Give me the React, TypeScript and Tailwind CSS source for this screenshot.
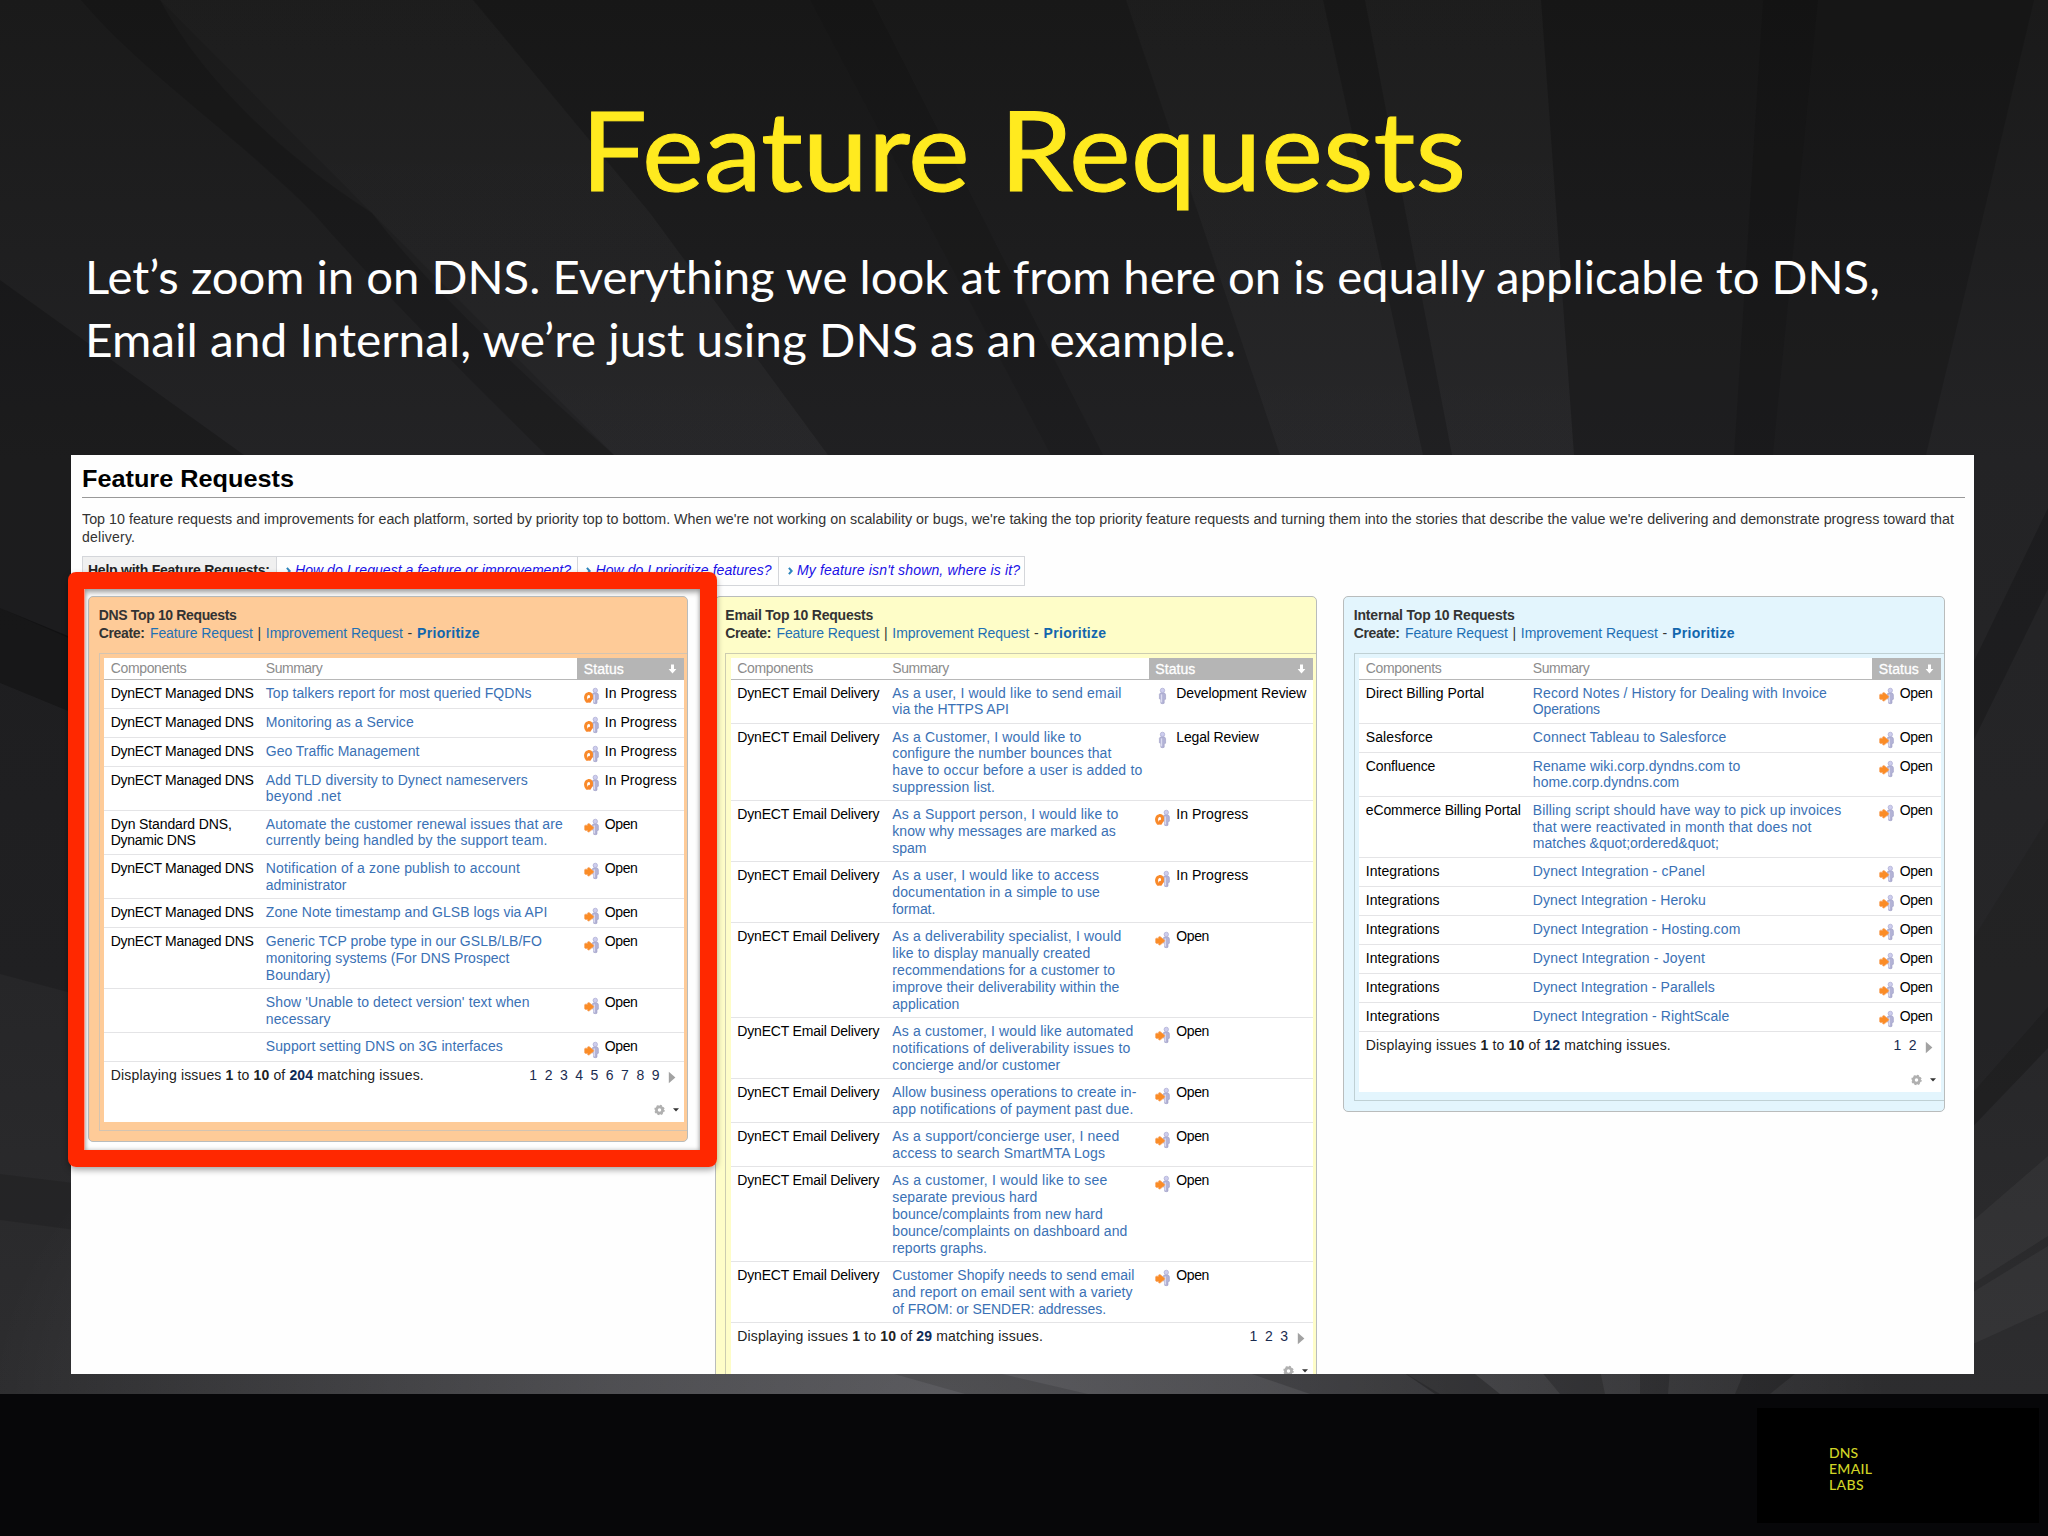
import { useLayoutEffect, useRef, type ReactNode } from "react";

/** Inline text that spans exactly `w` pixels, through tracking or, with `squeeze`, a horizontal scale. */
function Fit({ w, className = "", squeeze = false, children }: { w: number; className?: string; squeeze?: boolean; children: ReactNode }) {
  const ref = useRef<HTMLSpanElement>(null);
  useLayoutEffect(() => {
    const el = ref.current;
    if (!el) return;
    el.style.letterSpacing = "0px";
    el.style.transform = "none";
    const n = (el.textContent || "").length;
    const natural = el.getBoundingClientRect().width;
    if (squeeze) el.style.transform = `scaleX(${w / natural})`;
    else if (n > 1) el.style.letterSpacing = `${(w - natural) / (n - 1)}px`;
  }, [w, squeeze]);
  return (
    <span ref={ref} className={`inline-block origin-left whitespace-pre ${className}`}>
      {children}
    </span>
  );
}

type Line = [string, number];
type Status = "In Progress" | "Open" | "Development Review" | "Legal Review";
type Row = { comp: Line[]; summary: Line[]; status: Status };

const STATUS_WIDTH: Record<Status, number> = {
  "In Progress": 72,
  Open: 33,
  "Development Review": 130,
  "Legal Review": 82.5,
};

const managed: Line[] = [["DynECT Managed DNS", 143]];
const email: Line[] = [["DynECT Email Delivery", 142.3]];
const integrations: Line[] = [["Integrations", 73.7]];

const dnsRows: Row[] = [
  { comp: managed, summary: [["Top talkers report for most queried FQDNs", 265.8]], status: "In Progress" },
  { comp: managed, summary: [["Monitoring as a Service", 147.9]], status: "In Progress" },
  { comp: managed, summary: [["Geo Traffic Management", 153.5]], status: "In Progress" },
  { comp: managed, summary: [["Add TLD diversity to Dynect nameservers", 262], ["beyond .net", 75]], status: "In Progress" },
  {
    comp: [["Dyn Standard DNS,", 121], ["Dynamic DNS", 85]],
    summary: [["Automate the customer renewal issues that are", 297], ["currently being handled by the support team.", 281.5]],
    status: "Open",
  },
  { comp: managed, summary: [["Notification of a zone publish to account", 254], ["administrator", 80.7]], status: "Open" },
  { comp: managed, summary: [["Zone Note timestamp and GLSB logs via API", 281.5]], status: "Open" },
  {
    comp: managed,
    summary: [["Generic TCP probe type in our GSLB/LB/FO", 276], ["monitoring systems (For DNS Prospect", 243.7], ["Boundary)", 64.6]],
    status: "Open",
  },
  { comp: [], summary: [["Show 'Unable to detect version' text when", 263.7], ["necessary", 64.6]], status: "Open" },
  { comp: [], summary: [["Support setting DNS on 3G interfaces", 237]], status: "Open" },
];

const emailRows: Row[] = [
  { comp: email, summary: [["As a user, I would like to send email", 229], ["via the HTTPS API", 116.6]], status: "Development Review" },
  {
    comp: email,
    summary: [["As a Customer, I would like to", 189], ["configure the number bounces that", 219], ["have to occur before a user is added to", 250], ["suppression list.", 102.7]],
    status: "Legal Review",
  },
  { comp: email, summary: [["As a Support person, I would like to", 226], ["know why messages are marked as", 223.5], ["spam", 34]], status: "In Progress" },
  { comp: email, summary: [["As a user, I would like to access", 206.7], ["documentation in a simple to use", 207.5], ["format.", 43]], status: "In Progress" },
  {
    comp: email,
    summary: [["As a deliverability specialist, I would", 229], ["like to display manually created", 198], ["recommendations for a customer to", 222.7], ["improve their deliverability within the", 227], ["application", 67]],
    status: "Open",
  },
  { comp: email, summary: [["As a customer, I would like automated", 241], ["notifications of deliverability issues to", 238], ["concierge and/or customer", 168]], status: "Open" },
  { comp: email, summary: [["Allow business operations to create in-", 244], ["app notifications of payment past due.", 241]], status: "Open" },
  { comp: email, summary: [["As a support/concierge user, I need", 227], ["access to search SmartMTA Logs", 212.6]], status: "Open" },
  {
    comp: email,
    summary: [["As a customer, I would like to see", 215], ["separate previous hard", 145], ["bounce/complaints from new hard", 210.5], ["bounce/complaints on dashboard and", 235], ["reports graphs.", 94.7]],
    status: "Open",
  },
  { comp: email, summary: [["Customer Shopify needs to send email", 242], ["and report on email sent with a variety", 240.3], ["of FROM: or SENDER: addresses.", 213.8]], status: "Open" },
];

const internalRows: Row[] = [
  { comp: [["Direct Billing Portal", 118.3]], summary: [["Record Notes / History for Dealing with Invoice", 294], ["Operations", 67.3]], status: "Open" },
  { comp: [["Salesforce", 67]], summary: [["Connect Tableau to Salesforce", 193.6]], status: "Open" },
  { comp: [["Confluence", 69.5]], summary: [["Rename wiki.corp.dyndns.com to", 207.5], ["home.corp.dyndns.com", 146.5]], status: "Open" },
  {
    comp: [["eCommerce Billing Portal", 155]],
    summary: [["Billing script should have way to pick up invoices", 308.5], ["that were reactivated in month that does not", 278.6], ["matches &quot;ordered&quot;", 186]],
    status: "Open",
  },
  { comp: integrations, summary: [["Dynect Integration - cPanel", 172]], status: "Open" },
  { comp: integrations, summary: [["Dynect Integration - Heroku", 173]], status: "Open" },
  { comp: integrations, summary: [["Dynect Integration - Hosting.com", 207.5]], status: "Open" },
  { comp: integrations, summary: [["Dynect Integration - Joyent", 172]], status: "Open" },
  { comp: integrations, summary: [["Dynect Integration - Parallels", 182]], status: "Open" },
  { comp: integrations, summary: [["Dynect Integration - RightScale", 196.5]], status: "Open" },
];

function StatusIcon({ status }: { status: Status }) {
  const review = status === "Development Review" || status === "Legal Review";
  return (
    <svg className="mt-[2.5px] h-[18px] w-[16px] shrink-0" viewBox="0 0 16 18">
      <g transform={review ? "translate(-3.8 0)" : undefined}>
        <path d="M8.2 7.2q.4-1.2 1.8-1.4h2.6q1.7.4 1.8 2v4.4l-1.4.6v3.4q-1.6 1-3.4 0v-3.6l-1.4-.8z" fill="#b3b3d6" stroke="#9c9cc4" strokeWidth="0.6" />
        <path d="M10.3 7.4v8" stroke="#dcdcf0" strokeWidth="1.3" />
        <circle cx="11.3" cy="3.4" r="2.2" fill="#cdcdee" stroke="#a9a9d0" strokeWidth="0.7" />
      </g>
      {status === "Open" && (
        <path d="M1.4 7.200h2.200V6q.8-.9 1.800-.2l4 3.300q.7.700 0 1.400l-4 3.300q-1 .7-1.800-.2v-1.200H1.400q-.8-.2-.8-.9V8.100q0-.7.8-.9z" fill="#fb8c26" stroke="#f7a566" strokeWidth="0.7" strokeLinejoin="round" />
      )}
      {status === "In Progress" && (
        <>
          <path d="M3 14.200C.6 11.400 1.400 7.200 4.400 6.600 7.200 6.200 8 8.600 7.200 11.200" fill="none" stroke="#f98a2a" strokeWidth="3" strokeLinecap="round" />
          <path d="M4.400 11l4.800.2-2.800 4.600-3.400-.2z" fill="#f98429" />
        </>
      )}
    </svg>
  );
}

function Lines({ lines }: { lines: Line[] }) {
  return (
    <div className="flex flex-col items-start">
      {lines.map(([text, w]) => (
        <Fit key={text} w={w}>
          {text}
        </Fit>
      ))}
    </div>
  );
}

function DownArrow() {
  return (
    <svg className="h-[12px] w-[9px]" viewBox="0 0 9 12">
      <path d="M3 1.500h3v4.500h2.400L4.500 10.500.6 6H3z" fill="#fff" />
    </svg>
  );
}

type PanelProps = {
  title: Line;
  bg: string;
  width: string;
  cols: string;
  rows: Row[];
  total: string;
  totalWidth: number;
  pages: number[];
  line: string;
};

function Panel({ title, bg, width, cols, rows, total, totalWidth, pages, line }: PanelProps) {
  return (
    <section className={`${width} ${bg} shrink-0 self-start rounded-[5px] border-[1.5px] border-[#b9bcbc] pb-[10px] pl-[9.8px]`}>
      <div className="h-[56px] pt-[9px] text-[14px] leading-[18.5px] text-[#333]">
        <div className="font-bold">
          <Fit w={title[1]}>{title[0]}</Fit>
        </div>
        <div className="flex">
          <Fit w={46} className="mr-[5.5px] font-bold">Create:</Fit>
          <Fit w={103} className="text-[#1f70b4]">Feature Request</Fit>
          <span className="w-[13px] text-center">|</span>
          <Fit w={137} className="text-[#1f70b4]">Improvement Request</Fit>
          <span className="w-[14.3px] text-center">-</span>
          <Fit w={62.5} className="font-bold text-[#1266ad]">Prioritize</Fit>
        </div>
      </div>
      <div className={`${line} border-y-[1.5px] border-l-[1.5px] pb-[8px] pl-[4.5px] pr-[3px] pt-[4px]`}>
        <div className="bg-white text-[14px] leading-[16.8px]">
          <div className={`grid ${cols} h-[22px] leading-[20px] text-[#8c8c8c]`}>
            <div className="border-b-[1.5px] border-[#b8b8b8] pl-[6.5px]"><Fit w={76}>Components</Fit></div>
            <div className="border-b-[1.5px] border-[#b8b8b8] pl-[6.5px]"><Fit w={57}>Summary</Fit></div>
            <div className="flex items-center justify-between bg-[#b5b5b5] pl-[6.5px] pr-[7px] text-white">
              <Fit w={40} className="[-webkit-text-stroke:0.3px_white]">Status</Fit>
              <DownArrow />
            </div>
          </div>
          {rows.map((r, i) => (
            <div key={i} className={`grid ${cols} min-h-[29px] border-b border-[#e4e4e6] pb-[4.6px] pt-[5px]`}>
              <div className="pl-[6.5px] text-black"><Lines lines={r.comp} /></div>
              <div className="pl-[6.5px] text-[#3a71b5]"><Lines lines={r.summary} /></div>
              <div className="flex h-[16.8px] pl-[6.5px] text-black">
                <StatusIcon status={r.status} />
                <Fit w={STATUS_WIDTH[r.status]} className="ml-[5px]">{r.status}</Fit>
              </div>
            </div>
          ))}
          <div className="flex h-[41px] justify-between pl-[6.5px] pr-[8px] pt-[5px] text-[#222]">
            <Fit w={totalWidth}>
              Displaying issues <b>1</b> to <b>10</b> of <b className="text-[#102a55]">{total}</b> matching issues.
            </Fit>
            <div className="flex text-[#1a2c50]">
              {pages.map((p) => (
                <span key={p} className="w-[15.3px]">{p}</span>
              ))}
              <svg className="ml-[1px] mt-[4px] h-[13px] w-[8px]" viewBox="0 0 8 13">
                <path d="M.8.8 7.4 6.5.8 12.2z" fill="#a2a2a2" />
              </svg>
            </div>
          </div>
          <div className="flex h-[19px] items-start justify-end gap-[8px] pr-[5px]">
            <svg className="mt-[1px] h-[12px] w-[11px]" viewBox="0 0 12 12">
              <circle cx="6" cy="6" r="3.4" fill="none" stroke="#b0b0b0" strokeWidth="3" />
              <circle cx="6" cy="6" r="4.9" fill="none" stroke="#b0b0b0" strokeWidth="1.6" strokeDasharray="2 1.85" />
            </svg>
            <svg className="mt-[5px] h-[4px] w-[6px]" viewBox="0 0 7 4">
              <path d="M0 0h7L3.5 3.8z" fill="#333" />
            </svg>
          </div>
        </div>
      </div>
    </section>
  );
}

function HelpLink({ text, w, width }: { text: string; w: number; width: string }) {
  return (
    <div className={`flex items-center border-l border-[#d4d6da] pl-[8.5px] ${width}`}>
      <svg className="mr-[4.5px] h-[8px] w-[5px]" viewBox="0 0 5 8">
        <path d="M.9.8 3.7 4 .9 7.2" fill="none" stroke="#2f86bd" strokeWidth="2" />
      </svg>
      <Fit w={w} className="text-[14px] italic text-[#1a10e6]">{text}</Fit>
    </div>
  );
}

function Backdrop() {
  return (
    <svg className="absolute inset-0 h-[1536px] w-[2048px]" viewBox="0 0 2048 1536">
      <defs>
        <linearGradient id="base" x1="0" y1="0" x2="0" y2="1">
          <stop offset="0" stopColor="#1a1a1a" />
          <stop offset="0.33" stopColor="#232325" />
          <stop offset="0.7" stopColor="#262628" />
          <stop offset="1" stopColor="#2d2d2f" />
        </linearGradient>
        <linearGradient id="fade" gradientUnits="userSpaceOnUse" x1="0" y1="0" x2="0" y2="460">
          <stop offset="0" stopColor="#fff" stopOpacity="0.012" />
          <stop offset="1" stopColor="#eef" stopOpacity="0.022" />
        </linearGradient>
        <radialGradient id="glow" gradientUnits="userSpaceOnUse" cx="0" cy="0" r="1" gradientTransform="translate(940 1400) scale(950 500)">
          <stop offset="0" stopColor="#f4f4ff" stopOpacity="0.23" />
          <stop offset="0.35" stopColor="#f4f4ff" stopOpacity="0.17" />
          <stop offset="1" stopColor="#f4f4ff" stopOpacity="0" />
        </radialGradient>
      </defs>
      <rect width="2048" height="1394" fill="url(#base)" />
      <path d="M81 0H160L268 110L372 213L614 455H546L313 213L190 110Z" fill="none" />
      <path d="M81 0H160Q225 110 372 213Z" fill="none" />
      <path d="M81 0H160C200 75 275 150 372 213C430 290 530 380 614 455H546C470 380 390 300 313 213C230 130 140 70 81 0Z" fill="#000" fillOpacity="0.14" />
      <path d="M160 0H473L650 213L828 455H614L372 213Z" fill="url(#fade)" />
      <path d="M473 0H810L1051 455H828L650 213Z" fill="#000" fillOpacity="0.08" />
      <path d="M810 0H872L1103 455H1051Z" fill="#000" fillOpacity="0.16" />
      <path d="M872 0H1126L1280 455H1103Z" fill="#000" fillOpacity="0.04" />
      <path d="M1126 0H1323L1423 455H1280Z" fill="url(#fade)" />
      <path d="M1323 0H1365L1452 455H1423Z" fill="#000" fillOpacity="0.08" />
      <path d="M1365 0H1541L1574 455H1452Z" fill="url(#fade)" />
      <path d="M1541 0H1763L1734 455H1574Z" fill="#000" fillOpacity="0.12" />
      <path d="M1763 0H1818L1773 455H1734Z" fill="#000" fillOpacity="0.24" />
      <path d="M1818 0H2034L1964 297L1926 455H1773Z" fill="#000" fillOpacity="0.15" />
      <path d="M0 280L244 455H71V639L0 608Z" fill="#000" fillOpacity="0.2" />
      <path d="M0 608L90 645V720L0 683Z" fill="#000" fillOpacity="0.36" />
      <path d="M0 683L90 720V998L0 974Z" fill="#000" fillOpacity="0.14" />
      <path d="M0 1174L90 1185V1232L0 1220Z" fill="#000" fillOpacity="0.12" />
      <path d="M2048 508V589L1960 768V690Z" fill="#000" fillOpacity="0.18" />
      <path d="M2048 818V1007L1960 1107V960Z" fill="#000" fillOpacity="0.08" />
      <path d="M2048 1007V1048L1960 1140V1107Z" fill="#000" fillOpacity="0.2" />
      <path d="M2048 1156V1236L1960 1292V1232Z" fill="#fff" fillOpacity="0.04" />
      <path d="M2048 1246V1310L1960 1350V1300Z" fill="#fff" fillOpacity="0.04" />
      <rect width="2048" height="1394" fill="url(#glow)" />
      <path d="M880 1370H985L1088 1394H965Z" fill="#000" fillOpacity="0.12" />
      <path d="M1240 1370H1400L1440 1394H1310Z" fill="#000" fillOpacity="0.16" />
      <path d="M1400 1370H1470L1500 1394H1435Z" fill="#000" fillOpacity="0.24" />
      <path d="M1540 1370H1600L1605 1394H1560ZM1640 1370H1670L1668 1394H1640ZM1745 1370H1800L1770 1394H1735Z" fill="#000" fillOpacity="0.18" />
      <path d="M0 1394H2048V1536H0Z" fill="#070709" />
    </svg>
  );
}

export default function App() {
  return (
    <main className="relative flex h-[1536px] w-[2048px] flex-col overflow-hidden bg-[#1b1b1b] font-['Liberation_Sans',Arial,sans-serif]">
      <Backdrop />
      <header className="relative h-[455px] font-['Lato','Open_Sans',sans-serif]">
        <h1 className="h-[222px] pl-[581px] pt-[76px] text-[111px] leading-[144px] text-[#ffea1f] [-webkit-text-stroke:1px_#ffea1f]">
          <Fit w={885} squeeze>Feature Requests</Fit>
        </h1>
        <p className="flex flex-col items-start pl-[84.5px] pt-[23px] text-[46px] leading-[63px] text-white">
          <Fit w={1795} squeeze>Let’s zoom in on DNS. Everything we look at from here on is equally applicable to DNS,</Fit>
          <Fit w={1151} squeeze>Email and Internal, we’re just using DNS as an example.</Fit>
        </p>
      </header>

      <div className="relative ml-[71px] h-[919px] w-[1903px]">
        <div className="h-full overflow-hidden bg-[#fefefe] pl-[11px]">
          <div className="mr-[9px] h-[42.5px] border-b-[1.5px] border-[#999] pt-[9px] text-[24px] font-bold leading-[29px] text-black">
            <Fit w={212} squeeze>Feature Requests</Fit>
          </div>
          <p className="flex flex-col items-start pt-[12px] text-[14px] leading-[18.5px] text-[#333]">
            <Fit w={1872} squeeze>
              Top 10 feature requests and improvements for each platform, sorted by priority top to bottom. When we're not working on scalability or bugs, we're taking the top priority feature requests and turning them into the stories that describe the value we're delivering and demonstrate progress toward that
            </Fit>
            <Fit w={53}>delivery.</Fit>
          </p>
          <div className="mt-[9.5px] flex h-[29.5px] w-[943px] border border-[#d4d6da]">
            <div className="flex w-[193px] items-center bg-[#f0f0f0] pl-[5px] text-[14px] font-bold text-[#222]">
              <Fit w={182}>Help with Feature Requests:</Fit>
            </div>
            <HelpLink text="How do I request a feature or improvement?" w={276} width="w-[300.5px]" />
            <HelpLink text="How do I prioritize features?" w={176} width="w-[201.5px]" />
            <HelpLink text="My feature isn't shown, where is it?" w={223} width="w-[246px]" />
          </div>
          <div className="ml-[6px] mt-[10px] flex w-[1857px] items-start justify-between">
            <Panel title={["DNS Top 10 Requests", 138]} bg="bg-[#fecb98]" line="border-[#d3c4b2]" width="w-[600px]" cols="grid-cols-[155px_318px_1fr]" rows={dnsRows} total="204" totalWidth={313} pages={[1, 2, 3, 4, 5, 6, 7, 8, 9]} />
            <Panel title={["Email Top 10 Requests", 148]} bg="bg-[#fefdc8]" line="border-[#ccccb0]" width="w-[602px]" cols="grid-cols-[155px_263px_1fr]" rows={emailRows} total="29" totalWidth={305.6} pages={[1, 2, 3]} />
            <Panel title={["Internal Top 10 Requests", 161]} bg="bg-[#e3f5fd]" line="border-[#bfd0d4]" width="w-[602px]" cols="grid-cols-[167px_346px_1fr]" rows={internalRows} total="12" totalWidth={305} pages={[1, 2]} />
          </div>
        </div>
        <div className="absolute left-[-3px] top-[117px] h-[595px] w-[649px] rounded-[8px] shadow-[0_3px_6px_rgba(0,0,0,0.35)]" />
        <div className="absolute left-[-3px] top-[117px] h-[595px] w-[649px] rounded-[8px] bg-[#ff2800] [clip-path:polygon(evenodd,0_0,649px_0,649px_595px,0_595px,0_0,16.5px_17px,16.5px_578px,632px_578px,632px_17px,16.5px_17px)]" />
        <div className="absolute left-[13.5px] top-[134px] h-[561px] w-[615.5px] shadow-[inset_0_4px_5px_rgba(0,0,0,0.28),inset_0_0_4px_rgba(0,0,0,0.25)]" />
      </div>

      <footer className="relative mt-[34px] flex">
        <div className="ml-[1757px] flex h-[115px] w-[282px] flex-col items-start bg-black pl-[72px] pt-[37px] font-['Lato',sans-serif] text-[14px] font-medium leading-[15.8px] text-[#cfd426]">
          <Fit w={29}>DNS</Fit>
          <Fit w={43}>EMAIL</Fit>
          <Fit w={34.5}>LABS</Fit>
        </div>
      </footer>
    </main>
  );
}
